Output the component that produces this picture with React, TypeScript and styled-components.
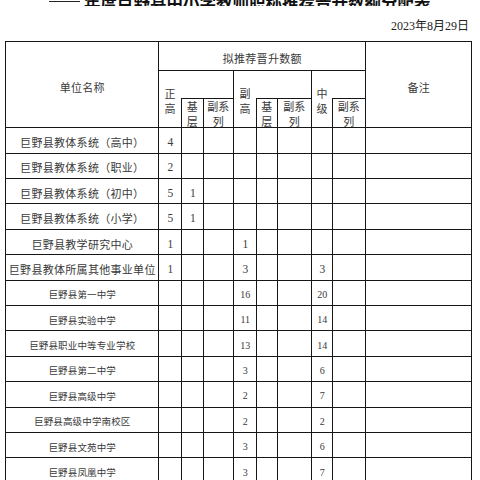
import React from "react";
import styled, { createGlobalStyle } from "styled-components";

const Global = createGlobalStyle`
  html, body { margin: 0; padding: 0; background: #fff; overflow: hidden; }
  body { font-family: "Noto Sans CJK SC", sans-serif; }
`;

const LINE = "1.5px solid #161616";
const CJK = `"Noto Sans CJK SC", sans-serif`;
const SERIF = `"Liberation Serif", "Noto Sans CJK SC", serif`;

const Page = styled.div`
  width: 480px;
  height: 480px;
  overflow: hidden;
`;

const TitleBar = styled.div`
  height: 6px;
  overflow: hidden;
  display: flex;
  align-items: flex-end;
  padding-left: 49px;
`;

const Blank = styled.span`
  flex: none;
  width: 31px;
  height: 0;
  border-bottom: 1.5px solid #222;
  margin-bottom: 4px;
`;

const TitleText = styled.span`
  margin-left: 4px;
  margin-bottom: -4px;
  font-family: ${CJK};
  font-size: 16.5px;
  line-height: 1;
  font-weight: 700;
  color: #111;
  white-space: nowrap;
`;

const DateLine = styled.div`
  margin-top: 12px;
  height: 17px;
  line-height: 17px;
  text-align: right;
  padding-right: 11px;
  font-family: ${SERIF};
  font-size: 12px;
  color: #222;
`;

const Grid = styled.div`
  margin: 6.25px 0 0 5.25px;
  width: max-content;
  display: grid;
  grid-template-columns: 153px 23px 22px 30px 23px 21px 34px 21px 33px 106px;
  grid-template-rows: 29px 28px 29px;
  grid-auto-rows: 25.4px;
  border-top: ${LINE};
  border-left: ${LINE};
  color: #3a3a3a;
  font-family: ${CJK};
`;

const HeadCell = styled.div<{ $col: string; $row: string; $pt?: number }>`
  box-sizing: border-box;
  grid-column: ${(p) => p.$col};
  grid-row: ${(p) => p.$row};
  border-right: ${LINE};
  border-bottom: ${LINE};
  display: flex;
  align-items: center;
  justify-content: center;
  padding-top: ${(p) => p.$pt ?? 0}px;
  font-size: 11px;
  letter-spacing: 0.3px;
  white-space: nowrap;
`;

const Group = styled.div<{ $col: string; $cols: string }>`
  box-sizing: border-box;
  grid-column: ${(p) => p.$col};
  grid-row: 2 / 4;
  border-right: ${LINE};
  border-bottom: ${LINE};
  display: grid;
  grid-template-columns: ${(p) => p.$cols};
  grid-template-rows: 26.5px 1fr;
`;

const GroupLabel = styled.div`
  grid-column: 1;
  grid-row: 1 / 3;
  padding-top: 15px;
  font-size: 11px;
  line-height: 15px;
  text-align: center;
`;

const SubHead = styled.div`
  box-sizing: border-box;
  grid-row: 2;
  border-left: ${LINE};
  border-top: ${LINE};
  font-size: 11px;
  line-height: 15.5px;
  text-align: center;
  white-space: nowrap;
`;

const BodyCell = styled.div`
  box-sizing: border-box;
  border-right: ${LINE};
  border-bottom: ${LINE};
  display: flex;
  align-items: center;
  justify-content: center;
  padding-top: 3px;
  white-space: nowrap;
`;

const NameCell = styled(BodyCell)<{ $big: boolean }>`
  font-family: ${CJK};
  font-size: ${(p) => (p.$big ? 11 : 9.5)}px;
  letter-spacing: ${(p) => (p.$big ? 0.3 : 0.15)}px;
`;

const NumCell = styled(BodyCell)<{ $big: boolean }>`
  font-family: ${SERIF};
  font-size: ${(p) => (p.$big ? 11.5 : 10)}px;
`;

const NoteCell = styled(BodyCell)``;

type Row = { name: string; v: string[]; big: boolean };

const rows: Row[] = [
  { name: "巨野县教体系统（高中）", v: ["4", "", "", "", "", "", "", ""], big: true },
  { name: "巨野县教体系统（职业）", v: ["2", "", "", "", "", "", "", ""], big: true },
  { name: "巨野县教体系统（初中）", v: ["5", "1", "", "", "", "", "", ""], big: true },
  { name: "巨野县教体系统（小学）", v: ["5", "1", "", "", "", "", "", ""], big: true },
  { name: "巨野县教学研究中心", v: ["1", "", "", "1", "", "", "", ""], big: true },
  { name: "巨野县教体所属其他事业单位", v: ["1", "", "", "3", "", "", "3", ""], big: true },
  { name: "巨野县第一中学", v: ["", "", "", "16", "", "", "20", ""], big: false },
  { name: "巨野县实验中学", v: ["", "", "", "11", "", "", "14", ""], big: false },
  { name: "巨野县职业中等专业学校", v: ["", "", "", "13", "", "", "14", ""], big: false },
  { name: "巨野县第二中学", v: ["", "", "", "3", "", "", "6", ""], big: false },
  { name: "巨野县高级中学", v: ["", "", "", "2", "", "", "7", ""], big: false },
  { name: "巨野县高级中学南校区", v: ["", "", "", "2", "", "", "2", ""], big: false },
  { name: "巨野县文苑中学", v: ["", "", "", "3", "", "", "6", ""], big: false },
  { name: "巨野县凤凰中学", v: ["", "", "", "3", "", "", "7", ""], big: false },
];

export default function App() {
  return (
    <Page>
      <Global />
      <TitleBar>
        <Blank />
        <TitleText>年度巨野县中小学教师职称推荐晋升数额分配表</TitleText>
      </TitleBar>
      <DateLine>2023年8月29日</DateLine>
      <Grid>
        <HeadCell $col="1" $row="1 / 4" $pt={4}>单位名称</HeadCell>
        <HeadCell $col="2 / 10" $row="1" $pt={4}>拟推荐晋升数额</HeadCell>
        <HeadCell $col="10" $row="1 / 4" $pt={4}>备注</HeadCell>

        <Group $col="2 / 5" $cols="21.5px 22px 30px">
          <GroupLabel>正<br />高</GroupLabel>
          <SubHead>基<br />层</SubHead>
          <SubHead>副系<br />列</SubHead>
        </Group>
        <Group $col="5 / 8" $cols="21.5px 21px 34px">
          <GroupLabel>副<br />高</GroupLabel>
          <SubHead>基<br />层</SubHead>
          <SubHead>副系<br />列</SubHead>
        </Group>
        <Group $col="8 / 10" $cols="19.5px 33px">
          <GroupLabel>中<br />级</GroupLabel>
          <SubHead>副系<br />列</SubHead>
        </Group>

        {rows.map((r) => (
          <React.Fragment key={r.name}>
            <NameCell $big={r.big}>{r.name}</NameCell>
            {r.v.map((x, i) => (
              <NumCell key={i} $big={r.big}>{x}</NumCell>
            ))}
            <NoteCell />
          </React.Fragment>
        ))}
      </Grid>
    </Page>
  );
}
